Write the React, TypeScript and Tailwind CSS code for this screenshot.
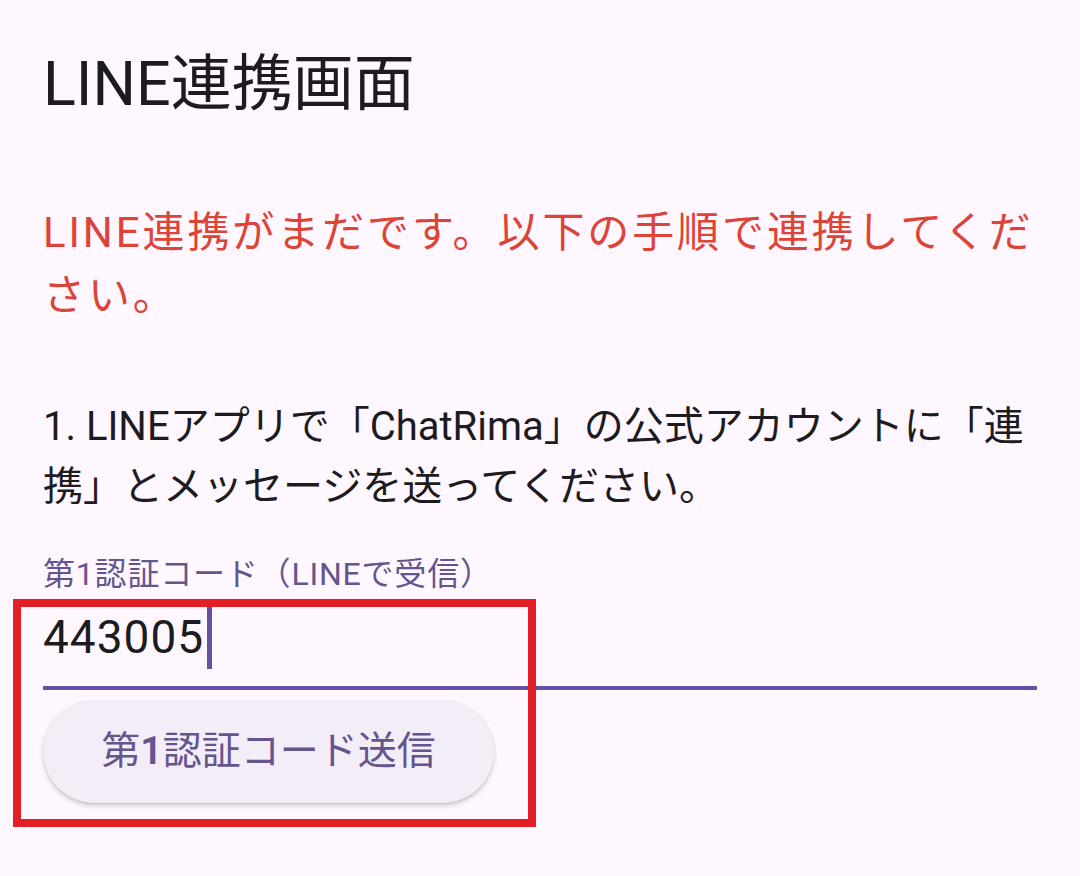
import React from "react";

const FONT = 'Roboto, "Noto Sans CJK JP", sans-serif';

export default function App() {
  return (
    <div
      className="relative min-h-[876px] w-full bg-[#fef7ff] px-[43px]"
      style={{ fontFamily: FONT }}
    >
      <h1 className="pt-[44px] text-[61px] leading-[80px] font-normal text-[#1d1b20]">
        LINE連携画面
      </h1>

      <p className="mt-[77px] text-[42px] leading-[63px] tracking-[2.9px] text-[#db4437] whitespace-nowrap">
        LINE連携がまだです。以下の手順で連携してくだ
        <br />
        さい。
      </p>

      <p className="mt-[70px] text-[40px] leading-[60px] text-[#1d1b20] whitespace-nowrap">
        1. LINEアプリで「ChatRima」の公式アカウントに「連
        <br />
        携」とメッセージを送ってください。
      </p>

      <div className="mt-[37px] text-[32px] leading-[40px] tracking-[0.8px] text-[#65558f]">
        第1認証コード（LINEで受信）
      </div>

      <div className="mt-[12px] border-b-4 border-[#6750a4] pb-[17px]">
        <div className="flex h-[63px] items-center">
          <span className="text-[46px] leading-[63px] tracking-[1px] text-[#1d1b20]">
            443005
          </span>
          <span className="ml-[3px] h-[63px] w-[5px] bg-[#6750a4]" />
        </div>
      </div>

      <button className="mt-[10px] flex h-[103px] w-[451px] items-center justify-center rounded-full bg-[#f3edf7] text-[39px] font-normal text-[#65558f] shadow-[0_3px_5px_rgba(0,0,0,0.16),0_1px_2px_rgba(0,0,0,0.10)]">
        <span>
          第<span className="font-semibold">1</span>認証コード送信
        </span>
      </button>

      <div className="pointer-events-none absolute left-[13px] top-[599px] h-[228px] w-[523px] border-[8px] border-[#e41e26]" />
    </div>
  );
}
